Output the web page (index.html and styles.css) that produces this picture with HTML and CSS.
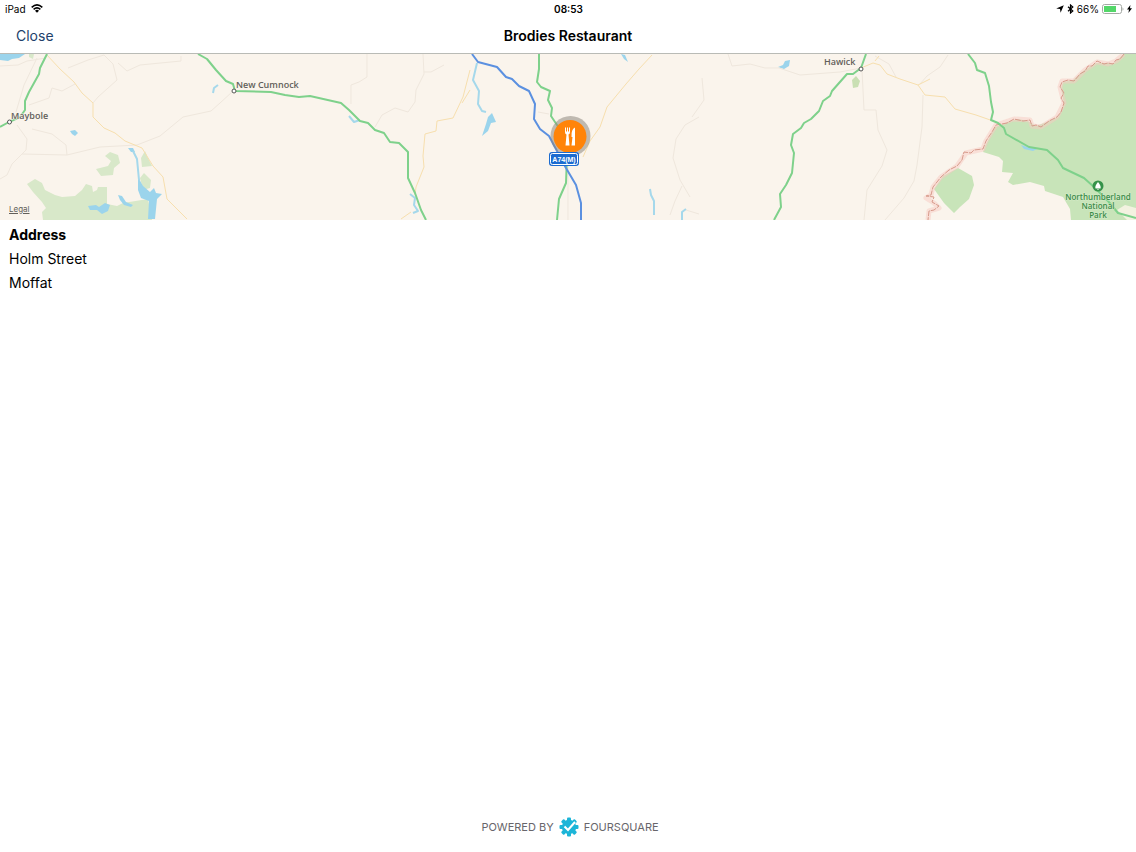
FILE: index.html
```html
<!DOCTYPE html>
<html lang="en">
<head>
	<meta charset="utf-8">
	<meta name="viewport" content="width=device-width, initial-scale=1">
	<title>Brodies Restaurant</title>
	<link rel="stylesheet" href="styles.css">
</head>
<body>
	<div class="status-bar">
		<div class="status-left">
			<span>iPad</span>
			<svg class="wifi" width="12" height="9" viewBox="0 0 12 9" aria-hidden="true">
				<path d="M0.7 3.3Q6 -1.5 11.3 3.3M2.6 5.3Q6 2.3 9.4 5.3" fill="none" stroke="#000" stroke-width="1.6"/>
				<path d="M4 6.7Q6 5 8 6.7L6 8.8Z"/>
			</svg>
		</div>
		<div class="status-time">08:53</div>
		<div class="status-right">
			<svg width="8" height="8" viewBox="0 0 8 8" aria-hidden="true">
				<path d="M7.8 0.2L4.6 7.8L4 4L0.2 3.6Z"/>
			</svg>
			<svg class="bluetooth" width="7" height="10" viewBox="0 0 7 10" aria-hidden="true">
				<path d="M1 2.8L5.8 7L3.5 9V1L5.8 3L1 7.2" fill="none" stroke="#000" stroke-width="1.2"/>
			</svg>
			<span>66%</span>
			<svg width="22" height="10" viewBox="0 0 22 10" aria-hidden="true">
				<rect x="0.5" y="0.5" width="19" height="9" rx="2" fill="#fff" stroke="#a5aaa5"/>
				<rect x="2" y="2" width="12" height="6" fill="#53d769"/>
				<path d="M20.5 3.2Q22.5 5 20.5 6.8Z" fill="#a5aaa5"/>
			</svg>
			<svg width="5" height="8" viewBox="0 0 5 8" aria-hidden="true">
				<path d="M3.4 0L0 4.6H2L1.4 8L5 3.2H3Z"/>
			</svg>
		</div>
	</div>

	<header class="nav-bar">
		<button class="close" type="button">Close</button>
		<h1>Brodies Restaurant</h1>
	</header>

	<div class="map">
		<svg class="map-canvas" viewBox="0 54 1136 166" preserveAspectRatio="xMidYMid slice" role="img" aria-label="Map">
			<rect y="54" width="1136" height="166" fill="#faf4ec"/>

			<!-- woods and parks -->
			<g fill="#d8e8c9">
				<path d="M27 184L35 179L42 183L45 190L55 195L62 197L75 196L82 190L86 184L92 186L93 192L97 190L98 187L107 187V204L117 206L123 203L148 199L152 220H43L42 212L46 208L42 202L33 192Z"/>
				<path d="M96 169L108 166L111 161L105 156L110 152L118 155L120 163L114 168L113 175L101 176Z"/>
				<path d="M141 158L145 151L148 158L152 166L142 167Z"/>
				<path d="M140 178L144 173L151 180L150 188L143 190Z"/>
				<path d="M29 54H34L33 59L29 57Z"/>
				<path d="M852 80L856 76L860 81L858 87L853 88Z" fill="#c9dfb3"/>
			</g>
			<g fill="#c8e4b9">
				<path d="M1124 54H1136V220H1071L1070 209L1063 197L1045 191L1044 186L1030 182L1013 185L1008 182L1013 173L1002 172L1003 161L999 157L983 152L985 146L995 127L1010 121L1018 119L1028 121L1036 126L1047 122L1058 117L1064 104L1061 88L1063 82L1073 80L1083 71L1096 63L1114 63Z"/>
				<path d="M934 189L943 176L958 168L972 176L974 185L969 199L960 207L954 213L944 203Z"/>
			</g>
			<path d="M1117 210L1125 205L1136 208V220H1127Z" fill="#f3f2e0"/>

			<!-- lochs and reservoirs -->
			<g fill="#9bd4ec">
				<path d="M0 54H25L19 58L12 59L8 61L0 60Z"/>
				<path d="M70 131L75 130L78 133L75 136L72 134Z"/>
				<path d="M128 148L133 148L135 152L131 152Z"/>
				<path d="M138 177L143 186L150 192L154 188L156 193L162 194L157 199L155 219H148L149 201L141 198L138 190Z"/>
				<path d="M88 206L96 205L99 207L105 203L110 205L108 211L102 214L97 210L90 210Z"/>
				<path d="M118 195L122 196L126 202L133 205L131 207L124 205L120 200Z"/>
				<path d="M482 136L486 124L488 117L492 113L496 122L491 123L488 131Z"/>
				<path d="M621 54L625 55L628 62L624 59Z"/>
				<path d="M778 67L783 65L785 61L790 60L789 66L784 69Z"/>
				<path d="M1021 145L1027 147L1037 149L1033 151L1024 149Z"/>
			</g>
			<g class="stream">
				<path d="M133 151L137 159L139 180"/>
				<path d="M213 93L214 88L218 85"/>
				<path d="M349 116L354 122L360 120"/>
				<path d="M410 194L415 198L414 205L418 211L413 213"/>
				<path d="M477 63L473 80L479 91L478 104L482 111L486 112"/>
				<path d="M650 189L651 195L654 201L654 215"/>
				<path d="M682 220L682 212L686 209"/>
			</g>

			<!-- lanes -->
			<g class="lane">
				<path d="M0 66L18 65L27 61L46 58"/>
				<path d="M68 68L88 60L104 55L113 64L117 80L98 97L93 103"/>
				<path d="M118 63L127 71L140 65L181 61L181 56"/>
				<path d="M17 125L27 139L26 150L12 164L7 175L0 179"/>
				<path d="M32 129L52 134L66 145L67 155"/>
				<path d="M22 154L67 155L100 147L137 145L160 136L183 117L211 111L220 103L232 92"/>
				<path d="M29 105L49 98L52 88L62 91L75 84M37 58L24 85L16 112"/>
				<path d="M367 54V77L359 82L351 85V104M423 54L424 74L416 90L415 102L408 112L395 108L382 115L375 127M424 72L431 72L444 65"/>
				<path d="M538 112L549 114M568 162V220"/>
				<path d="M699 117L685 125L676 139L673 158L680 180L690 197M670 215L675 201L682 186M686 210L699 214"/>
				<path d="M728 54L732 66L750 64L765 68L779 68L800 75L840 72L861 68M702 78L704 100L692 117"/>
				<path d="M862 70L864 110L876 110L878 130L887 150L882 166L867 190L864 220"/>
				<path d="M923 95L922 127L917 165L914 181L904 198L885 220"/>
				<path d="M920 84L927 76L940 67L948 55M896 77L889 64L875 56"/>
			</g>

			<!-- secondary roads -->
			<g class="road">
				<path d="M46 54L60 69L74 82L82 93L93 103L93 117L104 128L115 133L125 141L142 148L153 166L163 177L167 199L187 219"/>
				<path d="M470 70L463 97L453 118L437 121L436 131L425 134L423 156L424 167L416 187L415 195M411 212L401 219"/>
				<path d="M470 90L462 103M652 55L639 69L626 84L607 107L600 127L590 141L583 157"/>
				<path d="M861 68L873 63L880 65L887 74L900 79L918 85L925 95L945 97L955 109L976 115L996 122"/>
				<path d="M875 61L879 56M918 85L930 79"/>
			</g>

			<!-- national border -->
			<path class="border-glow" d="M1124 54L1116 61L1108 64L1097 62L1085 70L1074 81L1062 81L1060 87L1064 103L1057 117L1041 127L1032 126L1030 120L1014 119L996 125L986 141L983 149L966 153L957 166L941 177L933 187L931 195L926 198L934 203L939 208L929 211L928 220"/>
			<path class="border-line" d="M1124 54L1120 59L1116 60L1113 64L1108 63L1104 64L1097 61L1092 66L1088 66L1085 71L1080 74L1074 81L1068 80L1062 82L1060 87L1064 93L1061 98L1064 103L1061 112L1057 117L1049 121L1041 127L1036 125L1032 126L1030 120L1023 121L1014 119L1007 123L996 125L992 132L986 141L983 149L974 150L971 153L964 152L962 160L957 166L949 170L941 177L933 187L931 195L926 196L934 197L932 202L939 206L934 210L929 211L928 220"/>

			<!-- trunk roads and motorway -->
			<g class="trunk">
				<path d="M47 54L40 68L39 74L29 92L25 101L25 110L20 117L9 122L0 127"/>
				<path d="M198 54L207 59L216 70L226 81L233 84L235 91L271 92L285 95L299 97L310 96L341 103L349 110L360 121L368 123L375 130L384 133L390 142L399 143L408 152L408 178L415 193L421 210L426 220"/>
				<path d="M539 54L539 69L537 82L541 87L550 91L548 100L552 108L551 116L561 131L567 155L566 183L559 199L557 220"/>
				<path d="M866 54L861 68L853 74L847 74L832 91L830 96L823 101L819 111L811 119L804 123L801 128L793 134L791 145L794 153L792 173L786 185L780 194L781 207L774 220"/>
				<path d="M968 54L975 63L977 70L985 73L989 86L991 102L993 112L991 120L998 123L1004 128L1006 134L1029 147L1047 150L1058 160L1063 168L1084 178L1094 187L1108 201L1118 213L1136 218"/>
			</g>
			<path class="motorway" d="M472 54L478 62L497 67L506 77L512 79L519 86L529 91L535 104L534 119L540 129L549 136L557 151L566 168L576 185L581 203V220"/>

			<!-- places -->
			<g class="town">
				<circle cx="9.5" cy="122" r="2"/>
				<circle cx="234" cy="91" r="2"/>
				<circle cx="861" cy="69" r="2"/>
			</g>
			<g class="place">
				<text x="11" y="119">Maybole</text>
				<text x="236" y="88">New Cumnock</text>
				<text x="824" y="65">Hawick</text>
			</g>
			<circle cx="1098" cy="186" r="5.5" fill="#36934a"/>
			<path d="M1098 182Q1094.5 186 1095.5 188.5H1100.5Q1101.5 186 1098 182ZM1097.5 188H1098.5V190H1097.5Z" fill="#fff"/>
			<g class="park">
				<text x="1098" y="200">Northumberland</text>
				<text x="1098" y="209">National</text>
				<text x="1098" y="218">Park</text>
			</g>

			<!-- restaurant pin -->
			<circle cx="570.5" cy="136" r="20" fill="#8e8980" fill-opacity="0.55"/>
			<circle cx="570" cy="136.5" r="16.5" fill="#ff8409"/>
			<g fill="#fff">
				<path d="M565 127.5H566V131.5H567V127.5H568V131.5H569V127.5H570V132Q570 134 568.5 134.5L569.5 145.5H565.5L566.5 134.5Q565 134 565 132Z"/>
				<path d="M575 127.5V145.5H571.5L572.5 137H571.5Q571 129 575 127.5Z"/>
			</g>
			<rect x="549" y="152" width="30" height="14" rx="3" fill="#1b6bd0"/>
			<rect x="550.5" y="153.5" width="27" height="11" rx="2" fill="none" stroke="#fff"/>
			<text class="road-sign" x="564" y="162">A74(M)</text>
		</svg>
		<a class="legal" href="#legal">Legal</a>
	</div>

	<main class="details">
		<h2>Address</h2>
		<p>Holm Street</p>
		<p>Moffat</p>
	</main>

	<footer class="credit">
		<span>POWERED BY</span>
		<svg width="20" height="20" viewBox="0 0 20 20" aria-hidden="true">
			<g fill="#1cb5d8">
				<circle cx="10" cy="10" r="7.2"/>
				<rect x="8" y="0.5" width="4" height="19" rx="1"/>
				<rect x="8" y="0.5" width="4" height="19" rx="1" transform="rotate(45 10 10)"/>
				<rect x="8" y="0.5" width="4" height="19" rx="1" transform="rotate(90 10 10)"/>
				<rect x="8" y="0.5" width="4" height="19" rx="1" transform="rotate(135 10 10)"/>
			</g>
			<path d="M5.5 9.5L9 13L16 5" fill="none" stroke="#fff" stroke-width="2"/>
		</svg>
		<span>FOURSQUARE</span>
	</footer>
</body>
</html>
```
FILE: styles.css
```css
* {
	box-sizing: border-box;
}
body {
	margin: 0;
	min-height: 100vh;
	display: flex;
	flex-direction: column;
	background: #fff;
	color: #000;
	font-family: Inter, "Liberation Sans", sans-serif;
	font-size: 14px;
}
h1, h2, p {
	margin: 0;
}

/* top bars */
.status-bar {
	display: grid;
	grid-template-columns: 1fr auto 1fr;
	align-items: center;
	height: 17px;
	padding: 0 4px 0 5px;
	font-size: 10px;
}
.status-left, .status-right {
	display: flex;
	align-items: center;
	gap: 5px;
}
.status-right {
	justify-content: flex-end;
	gap: 3px;
}
.status-time {
	font-weight: 600;
}
.nav-bar {
	display: grid;
	grid-template-columns: 1fr auto 1fr;
	align-items: center;
	height: 37px;
	padding: 0 16px;
	border-bottom: 1px solid #b9bbb6;
}
.nav-bar h1 {
	font-size: 14px;
	font-weight: 600;
}
.close {
	justify-self: start;
	padding: 0;
	border: 0;
	background: none;
	color: #223f6b;
	font: inherit;
	cursor: pointer;
}

/* map */
.map {
	position: relative;
	height: 166px;
}
.map-canvas {
	display: block;
	width: 100%;
	height: 100%;
}
.stream, .lane, .road, .trunk, .motorway, .border-glow, .border-line {
	fill: none;
	stroke-linejoin: round;
}
.stream {
	stroke: #a5d8eb;
	stroke-width: 2;
}
.lane {
	stroke: #efe7dd;
	stroke-width: 1;
}
.road {
	stroke: #f7dfae;
	stroke-width: 1;
}
.trunk {
	stroke: #7ed18b;
	stroke-width: 2;
}
.motorway {
	stroke: #5b90e0;
	stroke-width: 2;
}
.border-glow {
	stroke: #f7c9c1;
	stroke-opacity: 0.5;
	stroke-width: 5;
}
.border-line {
	stroke: #d79b8c;
	stroke-width: 1;
	stroke-dasharray: 6 1;
}
.town {
	fill: #fff;
	stroke: #555;
	stroke-width: 1;
}
.place, .park {
	font-family: "Open Sans", sans-serif;
	font-size: 9px;
	font-weight: 600;
	paint-order: stroke;
	stroke: #faf4ec;
	stroke-width: 1;
}
.place {
	fill: #625f5a;
}
.park {
	fill: #3b8c48;
	font-size: 8px;
	stroke: #d5ebc9;
	text-anchor: middle;
}
.road-sign {
	fill: #fff;
	font-family: "Liberation Sans Narrow", "Liberation Sans", sans-serif;
	font-size: 7px;
	font-weight: 700;
	text-anchor: middle;
}
.legal {
	position: absolute;
	left: 9px;
	bottom: 6px;
	color: #625f5a;
	font-size: 8px;
	line-height: 10px;
}

/* address */
.details {
	flex: 1;
	padding: 3px 9px;
	line-height: 24px;
}
.details h2 {
	font-size: 14px;
	font-weight: 700;
}

.credit {
	display: flex;
	justify-content: center;
	align-items: center;
	gap: 5px;
	padding: 0 0 15px 4px;
	color: #68666b;
	font-size: 11px;
}
```
